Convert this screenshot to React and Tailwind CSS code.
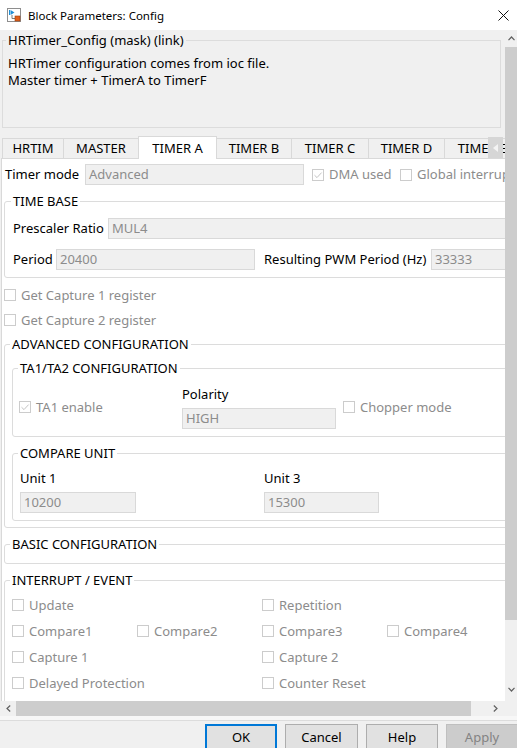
import React from "react";

function Box({ checked }) {
  return (
    <span className="w-[12px] h-[12px] border border-[#cccccc] bg-white flex items-center justify-center shrink-0">
      {checked && (
        <svg width="10" height="10" viewBox="0 0 10 10">
          <path d="M1.5 5.2 L4 7.6 L8.6 2.6" fill="none" stroke="#c4c4c4" strokeWidth="1" />
        </svg>
      )}
    </span>
  );
}

function Check({ label, checked }) {
  return (
    <div className="flex items-center h-[20px] gap-[5px] text-[#8c8c8c] whitespace-nowrap">
      <Box checked={checked} />
      <span>{label}</span>
    </div>
  );
}

function Input({ value, className }) {
  return (
    <div className={`h-[21px] bg-[#f0f0f0] border border-[#d9d9d9] flex items-center pl-[3px] text-[#8c8c8c] shrink-0 whitespace-nowrap overflow-hidden ${className}`}>
      {value}
    </div>
  );
}

function Group({ title, className, legendClass, children }) {
  return (
    <fieldset className={`border border-[#dcdcdc] rounded-[3px] min-w-0 ${className}`}>
      <legend className={`px-[2px] leading-[16px] text-black whitespace-nowrap ${legendClass}`}>{title}</legend>
      {children}
    </fieldset>
  );
}

const tabs = [
  { t: "HRTIM", w: "w-[62px]" },
  { t: "MASTER", w: "w-[76px]" },
  { t: "TIMER A", w: "w-[79px]", sel: true },
  { t: "TIMER B", w: "w-[76px]" },
  { t: "TIMER C", w: "w-[78px]" },
  { t: "TIMER D", w: "w-[77px]" },
  { t: "TIMER E", w: "w-[77px]" },
  { t: "TIMER F", w: "w-[77px]" },
];

const irq = [
  "Update", null, "Repetition", null,
  "Compare1", "Compare2", "Compare3", "Compare4",
  "Capture 1", null, "Capture 2", null,
  "Delayed Protection", null, "Counter Reset", null,
];

export default function App() {
  return (
    <div className="w-[517px] h-[748px] overflow-hidden bg-[#f0f0f0] flex flex-col text-[13px] leading-[17px] font-['Noto_Sans',sans-serif] text-black">
      {/* title bar */}
      <div className="h-[30px] bg-white flex items-center shrink-0">
        <svg className="ml-[7px] shrink-0" width="14" height="14" viewBox="0 0 14 14">
          <rect x="0.5" y="0.5" width="13" height="13" fill="#ffffff" stroke="#8e8e8e" />
          <path d="M2.5 2 V7" stroke="#1f8fd6" strokeWidth="1" />
          <path d="M3.5 2 L7.5 4.5 L3.5 7 Z" fill="#1f8fd6" />
          <path d="M5 7 V10.5 H8" stroke="#7a7a7a" fill="none" strokeWidth="1" />
          <rect x="8" y="8" width="5" height="5" fill="#e0601c" stroke="#9a3c0c" strokeWidth="0.6" />
        </svg>
        <span className="ml-[7px] text-[11.5px] text-black">Block Parameters: Config</span>
        <svg className="ml-auto mr-[8px] shrink-0" width="11" height="11" viewBox="0 0 11 11">
          <path d="M0.5 0.5 L10.5 10.5 M10.5 0.5 L0.5 10.5" stroke="#111" strokeWidth="1" />
        </svg>
      </div>

      {/* middle */}
      <div className="h-[671px] flex shrink-0">
        <div className="w-[505px] h-full overflow-hidden shrink-0">
          {/* mask header */}
          <fieldset className="ml-[2px] mt-[2px] w-[499px] border border-[#dcdcdc] min-w-0">
            <legend className="ml-[3px] px-[2px] leading-[16px] text-black whitespace-nowrap">HRTimer_Config (mask) (link)</legend>
            <div className="h-[79px] pt-[7px] pl-[5px] text-black">
              <div>HRTimer configuration comes from ioc file.</div>
              <div>Master timer + TimerA to TimerF</div>
            </div>
          </fieldset>

          {/* tabs */}
          <div className="mt-[8px] h-[22px] pl-[3px] flex items-end relative w-[600px]">
            {tabs.map((tb) =>
              tb.sel ? (
                <div key={tb.t} className={`${tb.w} h-[23px] -mb-px -ml-px bg-white border border-b-0 border-[#d9d9d9] relative z-10 flex items-center justify-center shrink-0`}>
                  {tb.t}
                </div>
              ) : (
                <div key={tb.t} className={`${tb.w} h-[20px] -ml-px bg-[#f0f0f0] border border-b-0 border-[#d9d9d9] flex items-center justify-center shrink-0`}>
                  {tb.t}
                </div>
              )
            )}
            <div className="absolute left-[488px] top-[1px] w-[15px] h-[21px] bg-[#d6d6d6] z-20 flex items-center justify-center">
              <svg width="5" height="8" viewBox="0 0 5 8">
                <path d="M5 0 L0 4 L5 8 Z" fill="#f4f4f4" />
              </svg>
            </div>
          </div>

          {/* tab panel */}
          <div className="ml-[1px] w-[600px] h-[600px] bg-white border-t border-l border-[#d9d9d9]">
            {/* Timer mode */}
            <div className="mt-[5px] h-[21px] pl-[3px] flex items-center">
              <span className="w-[80px] shrink-0">Timer mode</span>
              <Input value="Advanced" className="w-[219px]" />
              <div className="ml-[8px] w-[88px] shrink-0">
                <Check label="DMA used" checked />
              </div>
              <Check label="Global interrupt" />
            </div>

            {/* TIME BASE */}
            <Group title="TIME BASE" className="mt-[8px] ml-[2px] w-[570px]" legendClass="ml-[6px]">
              <div className="pt-[9px] pl-[8px] pb-[7px]">
                <div className="h-[21px] flex items-center">
                  <span className="w-[95px] shrink-0">Prescaler Ratio</span>
                  <Input value="MUL4" className="w-[430px]" />
                </div>
                <div className="mt-[10px] h-[21px] flex items-center">
                  <span className="w-[43px] shrink-0">Period</span>
                  <Input value="20400" className="w-[199px]" />
                  <span className="ml-[9px] w-[167px] shrink-0 whitespace-nowrap">Resulting PWM Period (Hz)</span>
                  <Input value="33333" className="w-[110px]" />
                </div>
              </div>
            </Group>

            <div className="pl-[2px]">
              <div className="mt-[7px]">
                <Check label="Get Capture 1 register" />
              </div>
              <div className="mt-[5px]">
                <Check label="Get Capture 2 register" />
              </div>
            </div>

            {/* ADVANCED CONFIGURATION */}
            <Group title="ADVANCED CONFIGURATION" className="mt-[6px] ml-[2px] w-[570px]" legendClass="ml-[5px]">
              <div className="pt-[8px] pl-[7px] pb-[6px]">
                <Group title="TA1/TA2 CONFIGURATION" className="w-[555px]" legendClass="ml-[5px]">
                  <div className="pt-[10px] pb-[7px] flex items-start">
                    <div className="w-[169px] pl-[6px] mt-[11px] shrink-0">
                      <Check label="TA1 enable" checked />
                    </div>
                    <div className="w-[161px] shrink-0">
                      <div className="h-[16px] leading-[16px]">Polarity</div>
                      <Input value="HIGH" className="mt-[6px] w-[154px]" />
                    </div>
                    <div className="mt-[11px]">
                      <Check label="Chopper mode" />
                    </div>
                  </div>
                </Group>
                <Group title="COMPARE UNIT" className="mt-[8px] w-[555px]" legendClass="ml-[5px]">
                  <div className="pt-[9px] pl-[7px] pb-[7px] flex items-start">
                    <div className="w-[244px] shrink-0">
                      <div className="h-[16px] leading-[16px]">Unit 1</div>
                      <Input value="10200" className="mt-[6px] w-[116px]" />
                    </div>
                    <div>
                      <div className="h-[16px] leading-[16px]">Unit 3</div>
                      <Input value="15300" className="mt-[6px] w-[115px]" />
                    </div>
                  </div>
                </Group>
              </div>
            </Group>

            {/* BASIC CONFIGURATION */}
            <Group title="BASIC CONFIGURATION" className="mt-[8px] ml-[2px] w-[570px]" legendClass="ml-[5px]">
              <div className="h-[11px]" />
            </Group>

            {/* INTERRUPT / EVENT */}
            <Group title="INTERRUPT / EVENT" className="mt-[8px] ml-[2px] w-[570px]" legendClass="ml-[5px]">
              <div className="pt-[7px] pl-[7px] pb-[10px] grid grid-cols-[125px_125px_125px_125px] gap-y-[6px]">
                {irq.map((l, i) => (l ? <Check key={i} label={l} /> : <div key={i} />))}
              </div>
            </Group>
          </div>
        </div>

        {/* vertical scrollbar */}
        <div className="w-[12px] h-full flex flex-col bg-[#f0f0f0] shrink-0">
          <div className="h-[17px] flex items-center justify-center shrink-0">
            <svg width="7" height="5" viewBox="0 0 7 5">
              <path d="M0.5 4.2 L3.5 1 L6.5 4.2" fill="none" stroke="#606060" strokeWidth="1.2" />
            </svg>
          </div>
          <div className="h-[573px] bg-[#cdcdcd] shrink-0" />
          <div className="flex-1" />
          <div className="h-[17px] flex items-center justify-center shrink-0 mb-[3px]">
            <svg width="7" height="5" viewBox="0 0 7 5">
              <path d="M0.5 0.8 L3.5 4 L6.5 0.8" fill="none" stroke="#606060" strokeWidth="1.2" />
            </svg>
          </div>
        </div>
      </div>

      {/* horizontal scrollbar */}
      <div className="h-[15px] flex items-stretch bg-[#f0f0f0] shrink-0">
        <div className="w-[16px] flex items-center justify-center shrink-0">
          <svg width="5" height="7" viewBox="0 0 5 7">
            <path d="M4.2 0.5 L1 3.5 L4.2 6.5" fill="none" stroke="#606060" strokeWidth="1.2" />
          </svg>
        </div>
        <div className="w-[455px] bg-[#cdcdcd] shrink-0" />
        <div className="w-[14px] shrink-0" />
        <div className="w-[20px] flex items-center justify-center shrink-0">
          <svg width="5" height="7" viewBox="0 0 5 7">
            <path d="M0.8 0.5 L4 3.5 L0.8 6.5" fill="none" stroke="#606060" strokeWidth="1.2" />
          </svg>
        </div>
        <div className="flex-1" />
      </div>

      {/* buttons */}
      <div className="flex-1 flex flex-col bg-[#f0f0f0]">
        <div className="h-[5px] bg-[#f7f7f7] border-b border-[#dcdcdc] shrink-0" />
        <div className="mt-[3px] flex items-start">
          <div className="ml-[205px] w-[72px] h-[26px] bg-[#e1e1e1] border-2 border-[#0078d7] flex items-center justify-center shrink-0">OK</div>
          <div className="ml-[8px] w-[73px] h-[26px] bg-[#e1e1e1] border border-[#adadad] flex items-center justify-center shrink-0">Cancel</div>
          <div className="ml-[8px] w-[72px] h-[26px] bg-[#e1e1e1] border border-[#adadad] flex items-center justify-center shrink-0">Help</div>
          <div className="ml-[8px] w-[72px] h-[26px] bg-[#cccccc] border border-[#bfbfbf] text-[#838383] flex items-center justify-center shrink-0">Apply</div>
        </div>
      </div>
    </div>
  );
}
